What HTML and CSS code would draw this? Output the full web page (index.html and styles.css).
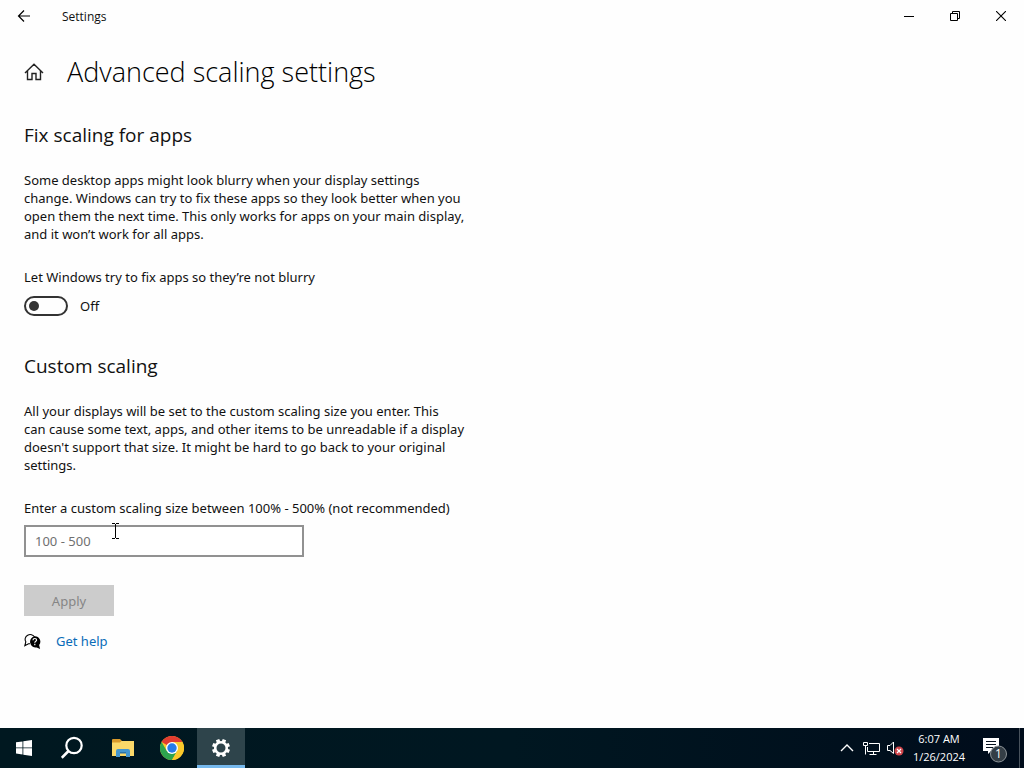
FILE: index.html
```html
<!DOCTYPE html>
<html lang="en">
<head>
<meta charset="utf-8">
<meta name="viewport" content="width=device-width, initial-scale=1">
<title>Settings</title>
<link rel="stylesheet" href="styles.css">
</head>
<body>
<div class="window">
  <header class="titlebar">
    <button class="back" aria-label="Back">
      <svg width="14" height="14" viewBox="0 0 14 14"><path d="M13 7H1.500M7 1.500L1.500 7L7 12.500" fill="none" stroke="#000" stroke-width="1.200"/></svg>
    </button>
    <span class="app-name">Settings</span>
    <div class="caption-buttons">
      <button aria-label="Minimize"><svg width="10" height="10" viewBox="0 0 10 10"><path d="M0 5.500h10" stroke="#000"/></svg></button>
      <button aria-label="Restore"><svg width="10" height="10" viewBox="0 0 10 10"><path d="M.5 2.500h7v7h-7zM2.500 2.500v-2h7v7h-2" fill="none" stroke="#000"/></svg></button>
      <button aria-label="Close"><svg width="10" height="10" viewBox="0 0 10 10"><path d="M0 0L10 10M10 0L0 10" stroke="#000" stroke-width="1.100"/></svg></button>
    </div>
  </header>
  <main class="content">
    <div class="page-head">
      <button class="home" aria-label="Home">
        <svg width="20" height="18" viewBox="0 0 20 18"><path d="M1 10L10 1.200L19 10M3.500 8V16.500H8V10.500H12V16.500H16.500V8" fill="none" stroke="#222" stroke-width="1.400"/></svg>
      </button>
      <h1>Advanced scaling settings</h1>
    </div>
    <section class="group">
      <h2>Fix scaling for apps</h2>
      <p>Some desktop apps might look blurry when your display settings<br>change. Windows can try to fix these apps so they look better when you<br>open them the next time. This only works for apps on your main display,<br>and it won’t work for all apps.</p>
      <label class="field-label" for="blurry">Let Windows try to fix apps so they’re not blurry</label>
      <div class="toggle-row">
        <input class="toggle" type="checkbox" role="switch" id="blurry">
        <span>Off</span>
      </div>
    </section>
    <section class="group">
      <h2>Custom scaling</h2>
      <p>All your displays will be set to the custom scaling size you enter. This<br>can cause some text, apps, and other items to be unreadable if a display<br>doesn't support that size. It might be hard to go back to your original<br>settings.</p>
      <label class="field-label" for="size">Enter a custom scaling size between 100% - 500% (not recommended)</label>
      <div class="size-box">
        <input class="size" type="text" id="size" placeholder="100 - 500">
        <svg class="pointer" width="9" height="17" viewBox="0 0 9 17"><path d="M1 .5H4M5 .5H8M1 15.500H4M5 15.500H8M4.500 1V15" fill="none" stroke="#000"/></svg>
      </div>
      <button class="apply" disabled>Apply</button>
    </section>
    <div class="help">
      <svg width="17" height="17" viewBox="0 0 17 17">
        <path d="M6 10.800H4.500L.8 12.800L1.800 8.800A5 4.800 0 1 1 10.600 4" fill="none" stroke="#000" stroke-width="1.100"/>
        <path d="M10.800 3.200a5.400 5.400 0 0 1 4.300 8.800l1 4-3.400-1.600A5.500 5.500 0 1 1 10.800 3.200z"/>
        <path d="M9 7.200q0-1.700 1.800-1.700t1.800 1.500q0 .9-1 1.400-.8.500-.8 1.300M10.800 10.800v1.400" fill="none" stroke="#fff" stroke-width="1.200"/>
      </svg>
      <a href="#help">Get help</a>
    </div>
  </main>
</div>
<footer class="taskbar">
  <nav class="apps" aria-label="Taskbar">
    <button aria-label="Start"><svg width="16" height="16" viewBox="0 0 16 16"><path fill="#fff" d="M0 2.300L6.500 1.400V7.500H0zM7.300 1.300L16 0V7.500H7.300zM0 8.300H6.500V14.500L0 13.600zM7.300 8.300H16V16L7.300 14.700z"/></svg></button>
    <button aria-label="Search"><svg width="24" height="24" viewBox="0 0 24 24"><circle cx="13" cy="9.500" r="7.700" fill="none" stroke="#fff" stroke-width="2.200"/><path d="M7.500 15L.8 21.800" stroke="#fff" stroke-width="2.600"/></svg></button>
    <button class="files" aria-label="File Explorer"><svg width="22" height="18" viewBox="0 0 22 18"><path fill="#d99a2b" d="M0 1q0-1 1-1H8L10 2H22V5H0z"/><path fill="#fbd969" d="M0 3.500H8L9.500 2H22V17H0z"/><path fill="#4396cf" d="M4 18V12q0-2 2-2H16q2 0 2 2V18H14V14H8V18z"/><path fill="#2b73a8" d="M8 13H14V14.500H8z"/></svg></button>
    <button aria-label="Chrome"><svg width="24" height="24" viewBox="0 0 24 24"><circle cx="12" cy="12" r="12" fill="#fbc92b"/><path fill="#e13c30" d="M12 12L1.600 6A12 12 0 0 1 22.400 6H12z"/><path fill="#2da44e" d="M1.600 6A12 12 0 0 0 12 24L17.200 15L12 12L6.800 15z"/><path fill="#fbc92b" d="M12 24L17.200 15A6 6 0 0 0 12 6H22.400A12 12 0 0 1 12 24z"/><circle cx="12" cy="12" r="6" fill="#fff"/><circle cx="12" cy="12" r="4.700" fill="#277be8"/></svg></button>
    <button class="active" aria-label="Settings"><svg width="18" height="18" viewBox="-9 -9 18 18"><circle r="5.800" fill="none" stroke="#fff" stroke-width="2.600"/><g stroke="#fff" stroke-width="3.600"><path d="M0-6V-9M0 6V9M-6 0H-9M6 0H9" transform="rotate(22.500)"/><path d="M0-6V-9M0 6V9M-6 0H-9M6 0H9" transform="rotate(67.500)"/></g></svg></button>
  </nav>
  <div class="tray">
    <button aria-label="Show hidden icons"><svg width="14" height="8" viewBox="0 0 14 8"><path d="M1 7L7 1L13 7" fill="none" stroke="#fff" stroke-width="1.400"/></svg></button>
    <button aria-label="Network"><svg width="17" height="15" viewBox="0 0 17 15"><path d="M6 2.500H16.500V10.500H4.500V6M.5 1.500h4v3h-4zM2.500 5V13.500M10.500 11V13.500M6.500 13.500h7" fill="none" stroke="#fff"/></svg></button>
    <button aria-label="Volume"><svg width="17" height="15" viewBox="0 0 17 15"><path d="M.5 4.500H3L6.500 1V12.500L3 9.500H.5z" fill="none" stroke="#fff"/><circle cx="12" cy="10" r="4.500" fill="#cf454b"/><path d="M10 8L14 12M14 8L10 12" stroke="#fff" stroke-width="1.200"/></svg></button>
    <time class="clock" datetime="2024-01-26T06:07"><span>6:07 AM</span><span>1/26/2024</span></time>
    <button class="notes" aria-label="Notifications"><svg width="24" height="26" viewBox="0 0 24 26"><path fill="#fff" d="M0 1H16V14H8L5 17V14H0z"/><path d="M3 4.500H13M3 7.500H13M3 10.500H10" stroke="#07131f"/><circle cx="15.500" cy="17" r="8" fill="#343e46" stroke="#8d9499"/><text x="15.500" y="21" text-anchor="middle" class="badge">1</text></svg></button>
    <span class="show-desktop"></span>
  </div>
</footer>
</body>
</html>
```
FILE: styles.css
```css
* { box-sizing: border-box; }
body {
  margin: 0;
  min-height: 100vh;
  display: flex;
  flex-direction: column;
  background: #fefefe;
  color: #111;
  font: 13px/18px "Noto Sans", "Open Sans", sans-serif;
}
h1, h2, p { margin: 0; }
button, input { font: inherit; color: inherit; }
button {
  display: flex;
  align-items: center;
  justify-content: center;
  padding: 0;
  border: 0;
  background: none;
}
svg { display: block; flex: none; }
.window { flex: 1; }
.titlebar { display: flex; align-items: center; height: 32px; }
.back { width: 48px; height: 32px; }
.app-name { padding: 2px 0 0 14px; font: 12px/18px "Open Sans", sans-serif; }
.caption-buttons { display: flex; margin-left: auto; }
.caption-buttons button { width: 46px; height: 32px; }
.content { padding: 20px 24px; }
.page-head { display: flex; align-items: center; gap: 23px; }
h1, h2 { font-family: "Open Sans", sans-serif; }
h1 { font-size: 27px; line-height: 40px; font-weight: 300; color: #000; }
h2 { font-size: 19px; line-height: 28px; font-weight: 400; }
.group { padding-top: 29px; }
.group + .group { padding-top: 36px; }
.group p { padding: 22px 0 25px; }
.field-label { display: block; padding-bottom: 8px; }
.toggle-row { display: flex; align-items: center; gap: 12px; padding-top: 2px; }
.toggle {
  appearance: none;
  display: flex;
  align-items: center;
  width: 44px;
  height: 20px;
  margin: 0;
  padding-left: 3px;
  border: 2px solid #333;
  border-radius: 10px;
}
.toggle::before {
  content: "";
  width: 10px;
  height: 10px;
  border-radius: 50%;
  background: #333;
}
.toggle:checked { justify-content: flex-end; padding: 0 3px; }
.size-box { position: relative; width: 280px; max-width: 100%; }
.size {
  display: block;
  width: 100%;
  height: 32px;
  padding: 0 9px;
  border: 2px solid #919191;
  background: #fff;
}
.size::placeholder { color: #707070; opacity: 1; }
.pointer { position: absolute; left: 87px; top: -2px; }
.apply {
  width: 90px;
  height: 31px;
  margin-top: 28px;
  background: #ccc;
  color: #858585;
}
.help { display: flex; align-items: center; gap: 15px; padding-top: 16px; }
.help a { color: #0a6cb8; text-decoration: none; }
.taskbar {
  display: flex;
  justify-content: space-between;
  height: 40px;
  background: linear-gradient(90deg, #001820, #001721 50%, #000c1b);
  color: #fff;
  font-family: "Open Sans", sans-serif;
}
.apps { display: flex; gap: 1px; }
.apps button { width: 48px; height: 40px; }
.apps .files { width: 49px; }
.apps .active {
  padding-top: 3px;
  border-bottom: 3px solid #76b9ed;
  background: #2e444b;
}
.tray { display: flex; align-items: center; }
.tray button { width: 24px; height: 40px; }
.clock {
  display: flex;
  flex-direction: column;
  width: 64px;
  text-align: center;
  font-size: 11px;
}
.tray .notes { width: 48px; padding-top: 4px; }
.badge { fill: #fff; font-size: 12px; }
.show-desktop { width: 5px; height: 40px; border-left: 1px solid #48525c; }
```
